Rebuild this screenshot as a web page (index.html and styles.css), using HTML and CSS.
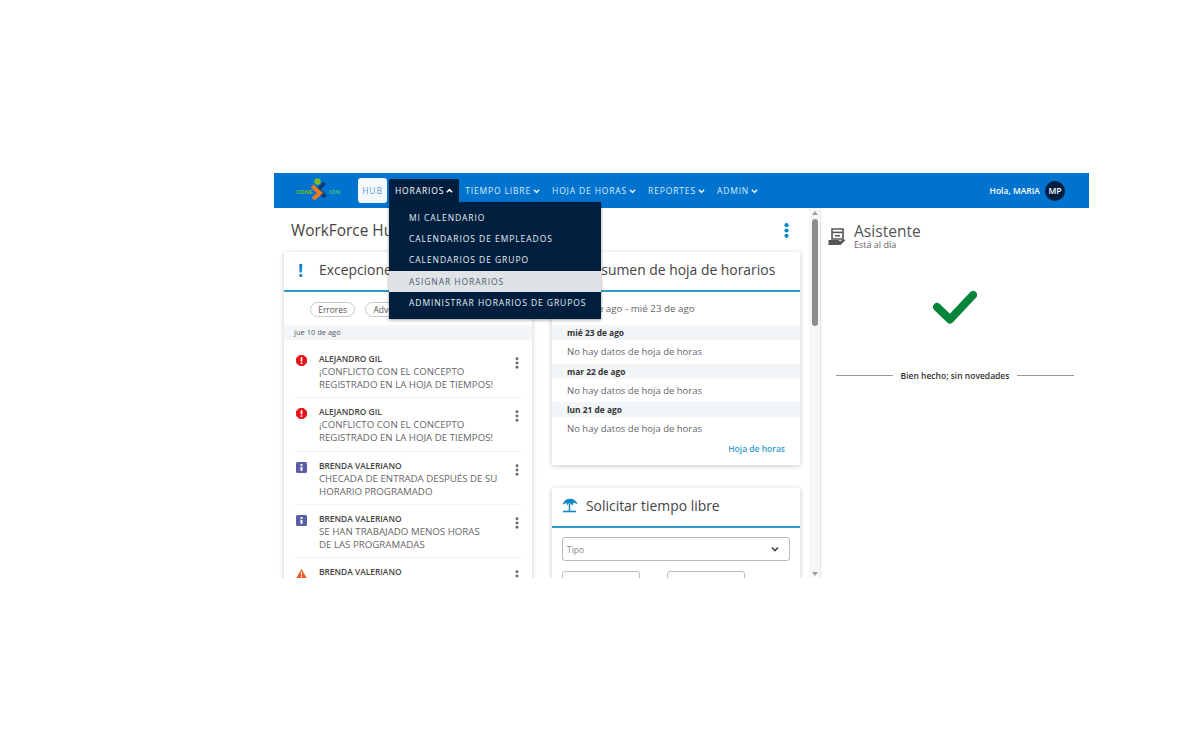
FILE: index.html
```html
<!DOCTYPE html>
<html lang="es">
<head>
	<meta charset="utf-8" />
	<title>WorkForce Hub</title>
	<link rel="stylesheet" href="styles.css">
</head>
<body>
<div class="app">
	<header class="topbar">
		<div class="logo">
			<span class="logo-text">CONE</span>
			<svg class="logo-x" width="18" height="24" viewBox="0 0 18 24">
				<path d="M14.5 5 L8 12 L15.5 19" fill="none" stroke="#0a3d78" stroke-width="4" />
				<path d="M2 8 L10 15 L3 21" fill="none" stroke="#f07a1c" stroke-width="4" />
				<circle cx="7.5" cy="3.5" r="3.2" fill="#7ab929" />
			</svg>
			<span class="logo-text logo-end">IÓN</span>
		</div>
		<nav class="nav">
			<a class="nav-hub">HUB</a>
			<a class="nav-item nav-open">HORARIOS <svg class="chev" viewBox="0 0 8 6"><path d="M1 4.5 L4 1.5 L7 4.5" /></svg></a>
			<a class="nav-item">TIEMPO LIBRE <svg class="chev" viewBox="0 0 8 6"><path d="M1 1.5 L4 4.5 L7 1.5" /></svg></a>
			<a class="nav-item">HOJA DE HORAS <svg class="chev" viewBox="0 0 8 6"><path d="M1 1.5 L4 4.5 L7 1.5" /></svg></a>
			<a class="nav-item">REPORTES <svg class="chev" viewBox="0 0 8 6"><path d="M1 1.5 L4 4.5 L7 1.5" /></svg></a>
			<a class="nav-item">ADMIN <svg class="chev" viewBox="0 0 8 6"><path d="M1 1.5 L4 4.5 L7 1.5" /></svg></a>
		</nav>
		<div class="user">
			<span>Hola, MARIA</span>
			<span class="avatar">MP</span>
		</div>
	</header>

	<ul class="dropdown">
		<li>MI CALENDARIO</li>
		<li>CALENDARIOS DE EMPLEADOS</li>
		<li>CALENDARIOS DE GRUPO</li>
		<li class="active">ASIGNAR HORARIOS</li>
		<li>ADMINISTRAR HORARIOS DE GRUPOS</li>
	</ul>

	<div class="content">
		<main class="hub">
			<div class="hub-head">
				<h1>WorkForce Hub</h1>
				<svg class="kebab kebab-blue" width="5" height="15" viewBox="0 0 5 15"><circle cx="2.5" cy="2.2" r="2.1" /><circle cx="2.5" cy="7.5" r="2.1" /><circle cx="2.5" cy="12.8" r="2.1" /></svg>
			</div>
			<div class="columns">
				<section class="card">
					<div class="card-head">
						<span class="bang">!</span>
						<h2>Excepciones</h2>
					</div>
					<div class="chips">
						<span class="chip">Errores</span>
						<span class="chip">Advertencias</span>
					</div>
					<div class="band band-light">jue 10 de ago</div>
					<div class="exception">
						<svg class="ex-icon" width="11" height="11" viewBox="0 0 12 12"><path d="M3.5 0.5 H8.5 L11.5 3.5 V8.5 L8.5 11.5 H3.5 L0.5 8.5 V3.5 Z" fill="#e8141c" stroke="#e8141c" stroke-linejoin="round" /><rect x="5.1" y="2.4" width="1.8" height="4.6" fill="#fff" /><rect x="5.1" y="8" width="1.8" height="1.7" fill="#fff" /></svg>
						<div class="ex-text">
							<b>ALEJANDRO GIL</b>
							<p>¡CONFLICTO CON EL CONCEPTO<br>REGISTRADO EN LA HOJA DE TIEMPOS!</p>
						</div>
						<svg class="kebab" width="4" height="14" viewBox="0 0 4 14"><circle cx="2" cy="2" r="1.7" /><circle cx="2" cy="7" r="1.7" /><circle cx="2" cy="12" r="1.7" /></svg>
					</div>
					<div class="exception">
						<svg class="ex-icon" width="11" height="11" viewBox="0 0 12 12"><path d="M3.5 0.5 H8.5 L11.5 3.5 V8.5 L8.5 11.5 H3.5 L0.5 8.5 V3.5 Z" fill="#e8141c" stroke="#e8141c" stroke-linejoin="round" /><rect x="5.1" y="2.4" width="1.8" height="4.6" fill="#fff" /><rect x="5.1" y="8" width="1.8" height="1.7" fill="#fff" /></svg>
						<div class="ex-text">
							<b>ALEJANDRO GIL</b>
							<p>¡CONFLICTO CON EL CONCEPTO<br>REGISTRADO EN LA HOJA DE TIEMPOS!</p>
						</div>
						<svg class="kebab" width="4" height="14" viewBox="0 0 4 14"><circle cx="2" cy="2" r="1.7" /><circle cx="2" cy="7" r="1.7" /><circle cx="2" cy="12" r="1.7" /></svg>
					</div>
					<div class="exception">
						<svg class="ex-icon" width="11" height="11" viewBox="0 0 11 11"><rect width="11" height="11" rx="1.5" fill="#5b5ea6" /><rect x="4.5" y="2" width="2" height="1.8" fill="#fff" /><rect x="4.5" y="4.8" width="2" height="4" fill="#fff" /></svg>
						<div class="ex-text">
							<b>BRENDA VALERIANO</b>
							<p>CHECADA DE ENTRADA DESPUÉS DE SU<br>HORARIO PROGRAMADO</p>
						</div>
						<svg class="kebab" width="4" height="14" viewBox="0 0 4 14"><circle cx="2" cy="2" r="1.7" /><circle cx="2" cy="7" r="1.7" /><circle cx="2" cy="12" r="1.7" /></svg>
					</div>
					<div class="exception">
						<svg class="ex-icon" width="11" height="11" viewBox="0 0 11 11"><rect width="11" height="11" rx="1.5" fill="#5b5ea6" /><rect x="4.5" y="2" width="2" height="1.8" fill="#fff" /><rect x="4.5" y="4.8" width="2" height="4" fill="#fff" /></svg>
						<div class="ex-text">
							<b>BRENDA VALERIANO</b>
							<p>SE HAN TRABAJADO MENOS HORAS<br>DE LAS PROGRAMADAS</p>
						</div>
						<svg class="kebab" width="4" height="14" viewBox="0 0 4 14"><circle cx="2" cy="2" r="1.7" /><circle cx="2" cy="7" r="1.7" /><circle cx="2" cy="12" r="1.7" /></svg>
					</div>
					<div class="exception">
						<svg class="ex-icon" width="11" height="11" viewBox="0 0 12 11"><path d="M6 0.5 L11.7 10.7 H0.3 Z" fill="#f0541e" /><rect x="5.3" y="3.6" width="1.4" height="4" fill="#fff" /><rect x="5.3" y="8.3" width="1.4" height="1.4" fill="#fff" /></svg>
						<div class="ex-text">
							<b>BRENDA VALERIANO</b>
							<p>CHECADA DE ENTRADA DESPUÉS DE SU<br>HORARIO PROGRAMADO</p>
						</div>
						<svg class="kebab" width="4" height="14" viewBox="0 0 4 14"><circle cx="2" cy="2" r="1.7" /><circle cx="2" cy="7" r="1.7" /><circle cx="2" cy="12" r="1.7" /></svg>
					</div>
				</section>

				<div class="stack">
					<section class="card">
						<div class="card-head">
							<h2 class="summary-title">Resumen de hoja de horarios</h2>
						</div>
						<div class="range">lun 21 de ago - mié 23 de ago</div>
						<div class="band">mié 23 de ago</div>
						<div class="empty">No hay datos de hoja de horas</div>
						<div class="band">mar 22 de ago</div>
						<div class="empty">No hay datos de hoja de horas</div>
						<div class="band">lun 21 de ago</div>
						<div class="empty">No hay datos de hoja de horas</div>
						<a class="card-link">Hoja de horas</a>
					</section>
					<section class="card">
						<div class="card-head">
							<svg class="umbrella" width="16" height="15" viewBox="0 0 16 15"><path d="M1 6.5 C1.5 3.5 4 1 7.5 0.8 C11 0.6 14.5 2.5 15.5 6.5 L11.8 4.6 L10.5 7.5 L7.5 4.8 L5.2 7.2 L4.6 5 Z" fill="#1187c4" /><path d="M7.5 5.5 L7.5 13" stroke="#1187c4" stroke-width="1.5" /><rect x="1" y="12.7" width="13" height="1.6" fill="#1187c4" /></svg>
							<h2>Solicitar tiempo libre</h2>
						</div>
						<div class="form">
							<div class="select">
								<span>Tipo</span>
								<svg class="select-chev" viewBox="0 0 8 6"><path d="M1 1.5 L4 4.5 L7 1.5" /></svg>
							</div>
							<div class="dates">
								<div class="date-input"></div>
								<div class="date-input"></div>
							</div>
						</div>
					</section>
				</div>
			</div>
		</main>

		<div class="scrollbar">
			<span class="arrow-up"></span>
			<span class="thumb"></span>
			<span class="arrow-down"></span>
		</div>

		<aside class="assistant">
			<div class="assistant-head">
				<svg width="18" height="18" viewBox="0 0 18 18">
					<path d="M4 1 H15 V11 H4 Z" fill="none" stroke="#555" stroke-width="1.6" />
					<rect x="4" y="3.6" width="11" height="1.6" fill="#555" />
					<rect x="7" y="7" width="5" height="1.5" fill="#555" />
					<path d="M0.5 12 H10.5 L12 13.2 L15.5 11.2 L17.5 12 L12.5 17 H0.5 Z" fill="#555" />
				</svg>
				<div>
					<h2>Asistente</h2>
					<p>Está al día</p>
				</div>
			</div>
			<svg class="check" width="44" height="34" viewBox="0 0 44 34"><path d="M4 17 L17 29.5 L40 5" fill="none" stroke="#05843a" stroke-width="8" stroke-linejoin="round" stroke-linecap="round" /></svg>
			<div class="done"><span>Bien hecho; sin novedades</span></div>
		</aside>
	</div>
</div>
</body>
</html>
```

FILE: styles.css
```css
html, body {
	margin: 0;
	background: #fff;
}
body {
	font-family: "Open Sans", "Liberation Sans", sans-serif;
	color: #444;
}
h1, h2, p, ul {
	margin: 0;
	padding: 0;
}

.app {
	position: relative;
	width: 815px;
	height: 405px;
	margin: 173px 0 0 274px;
	overflow: hidden;
}

/* top bar */
.topbar {
	display: flex;
	align-items: flex-end;
	height: 35px;
	background: #0073cf;
	color: #fff;
}
.logo {
	display: flex;
	align-items: center;
	width: 84px;
	height: 35px;
	padding: 3px 0 0 22px;
	box-sizing: border-box;
	color: #7ab929;
}
.logo-text {
	font-size: 6px;
	font-weight: 700;
	width: 14px;
	letter-spacing: -0.1px;
}
.logo-end {
	color: #45b58a;
	margin-left: 1px;
}
.logo-x {
	flex: none;
	margin-top: -4px;
}
.nav {
	display: flex;
	align-items: flex-end;
	height: 35px;
	font-size: 8.5px;
	font-weight: 500;
	letter-spacing: 0.85px;
}
.nav-hub {
	align-self: center;
	width: 29px;
	height: 25px;
	line-height: 25px;
	text-align: center;
	background: #f4f8fc;
	color: #5d9bd6;
	border-radius: 3px;
	font-weight: 400;
}
.nav-item {
	display: flex;
	align-items: center;
	gap: 2px;
	height: 29px;
	padding: 0 6px 6px;
	box-sizing: border-box;
	white-space: nowrap;
	color: #dcebf8;
}
.nav-open {
	margin-left: 2px;
	background: #001f3f;
	color: #fff;
	border-radius: 2px 2px 0 0;
}
.chev {
	width: 7px;
	height: 6px;
	fill: none;
	stroke: currentColor;
	stroke-width: 1.8;
}
.user {
	display: flex;
	align-items: center;
	gap: 5px;
	height: 35px;
	margin-left: auto;
	padding-right: 24px;
	font-size: 8.5px;
	font-weight: 600;
}
.avatar {
	width: 20px;
	height: 20px;
	line-height: 20px;
	text-align: center;
	border-radius: 50%;
	background: #001f3f;
	font-size: 8.5px;
}

/* menu over the page */
.dropdown {
	position: absolute;
	left: 115px;
	top: 29px;
	z-index: 5;
	width: 212px;
	padding: 5px 0 6px;
	list-style: none;
	background: #001f3f;
	box-shadow: 0 1px 3px rgba(0, 0, 0, 0.4);
	color: #e8eef5;
	font-size: 8.5px;
	font-weight: 500;
	letter-spacing: 0.93px;
}
.dropdown li {
	height: 21.2px;
	line-height: 21.2px;
	padding-left: 20px;
	white-space: nowrap;
}
.dropdown .active {
	background: #dfe3e6;
	color: #4a5a6c;
	font-weight: 400;
}

/* page body */
.content {
	display: flex;
	height: 370px;
}
.hub {
	width: 535px;
	flex: none;
	overflow: hidden;
}
.hub-head {
	display: flex;
	align-items: center;
	justify-content: space-between;
	height: 44px;
	padding: 0 20px 0 17px;
}
.hub-head h1 {
	font-size: 15.4px;
	font-weight: 400;
	color: #444;
	white-space: nowrap;
}
.kebab {
	flex: none;
	fill: #6c6c6c;
}
.kebab-blue {
	fill: #0f86c5;
}
.columns {
	display: flex;
	gap: 20px;
	padding-left: 10px;
	align-items: flex-start;
}
.card {
	width: 248px;
	flex: none;
	background: #fff;
	box-shadow: 0 1px 5px rgba(0, 0, 0, 0.22);
}
.stack {
	display: flex;
	flex-direction: column;
	gap: 23px;
}
.card-head {
	display: flex;
	align-items: center;
	height: 40px;
	padding: 0 0 3px 14px;
	box-sizing: border-box;
	border-bottom: 2px solid #2f9ccb;
}
.card-head h2 {
	font-size: 13.9px;
	font-weight: 400;
	color: #444;
	white-space: nowrap;
}
.bang {
	width: 21px;
	font-size: 18px;
	font-weight: 700;
	color: #0f86c5;
}
.summary-title {
	margin-left: 19px;
}
.card-head .umbrella {
	margin: 0 8px 0 -4px;
}
.chips {
	display: flex;
	gap: 10px;
	height: 33px;
	padding: 10px 0 0 26px;
	box-sizing: border-box;
}
.chip {
	height: 15px;
	line-height: 14px;
	padding: 0 7.3px;
	border: 1px solid #c8c8c8;
	border-radius: 8px;
	box-sizing: border-box;
	font-size: 8.4px;
	color: #555;
}
.band {
	height: 15px;
	line-height: 15px;
	padding-left: 15px;
	background: #f2f6f9;
	font-size: 8.4px;
	font-weight: 700;
	color: #333;
}
.band-light {
	margin-bottom: 5px;
	padding-left: 10px;
	font-weight: 400;
	font-size: 7.5px;
	color: #555;
}
.exception {
	display: flex;
	align-items: flex-start;
	height: 53.3px;
	margin: 0 10px;
	padding-top: 10px;
	box-sizing: border-box;
	border-bottom: 1px solid #f0f0f0;
}
.ex-icon {
	flex: none;
	margin: 0 12px 0 2px;
}
.ex-text {
	flex: 1;
	margin-top: -3px;
	font-size: 9.7px;
	line-height: 13px;
	color: #666;
	white-space: nowrap;
}
.ex-text b {
	display: block;
	font-size: 8.4px;
	font-weight: 600;
	color: #444;
}
.exception .kebab {
	width: 4px;
	height: 12px;
	margin: 2px 3px 0 0;
}
.range {
	height: 33px;
	line-height: 33px;
	padding-left: 9px;
	font-size: 9.8px;
	color: #666;
	white-space: nowrap;
}
.empty {
	height: 23.5px;
	line-height: 24px;
	padding-left: 15px;
	font-size: 9.5px;
	color: #666;
}
.card-link {
	display: block;
	height: 24.5px;
	padding: 2px 15px 0 0;
	box-sizing: border-box;
	text-align: right;
	font-size: 8.5px;
	font-weight: 600;
	color: #2f9ccb;
}
.form {
	padding: 9px 10px 0;
}
.select {
	display: flex;
	align-items: center;
	justify-content: space-between;
	height: 22px;
	padding: 0 10px 0 4px;
	border: 1px solid #bbb;
	border-radius: 3px;
	font-size: 8.5px;
	color: #888;
}
.select-chev {
	width: 8px;
	height: 6px;
	fill: none;
	stroke: #444;
	stroke-width: 1.6;
}
.dates {
	display: flex;
	gap: 27px;
	margin-top: 10px;
}
.date-input {
	width: 78px;
	height: 24px;
	box-sizing: border-box;
	border: 1px solid #bbb;
	border-radius: 3px;
}

.scrollbar {
	display: flex;
	flex-direction: column;
	align-items: center;
	width: 11px;
	flex: none;
	background: #f7f7f7;
	padding-top: 3px;
	box-sizing: border-box;
}
.arrow-up, .arrow-down {
	width: 0;
	height: 0;
	border-left: 3px solid transparent;
	border-right: 3px solid transparent;
}
.arrow-up {
	border-bottom: 4px solid #a0a0a0;
}
.arrow-down {
	border-top: 4px solid #a0a0a0;
	margin-top: auto;
	margin-bottom: 2px;
}
.thumb {
	width: 6px;
	height: 107px;
	margin-top: 4px;
	border-radius: 3px;
	background: #8e8e8e;
}

/* right side */
.assistant {
	flex: 1;
	display: flex;
	flex-direction: column;
	align-items: center;
	border-left: 1px solid #e4e4e4;
}
.assistant-head {
	align-self: flex-start;
	display: flex;
	align-items: center;
	gap: 8px;
	height: 27px;
	margin: 15px 0 0 7px;
}
.assistant-head h2 {
	font-size: 15.6px;
	line-height: 16px;
	font-weight: 400;
	color: #555;
}
.assistant-head p {
	margin-top: 1px;
	font-size: 9px;
	line-height: 10px;
	color: #666;
}
.check {
	margin-top: 40px;
}
.done {
	display: flex;
	align-items: center;
	gap: 8px;
	width: 238px;
	margin-top: 46px;
	font-size: 8.5px;
	font-weight: 600;
	color: #333;
	white-space: nowrap;
}
.done::before, .done::after {
	content: "";
	flex: 1;
	height: 1px;
	background: #999;
}
```
